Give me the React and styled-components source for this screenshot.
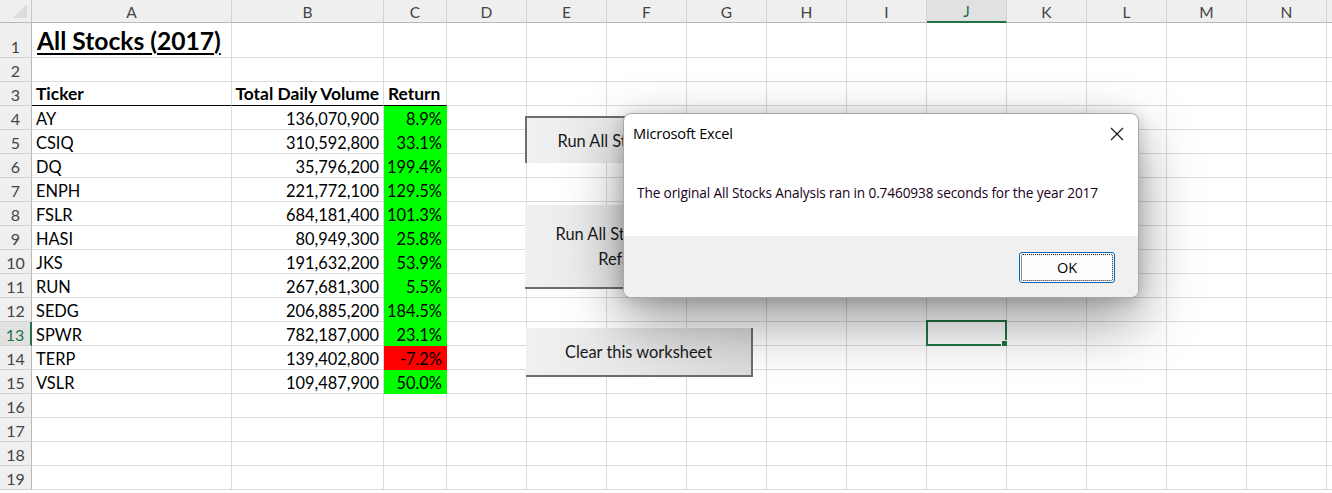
import React from 'react'
import styled, { createGlobalStyle, css } from 'styled-components'

const GlobalStyle = createGlobalStyle`
  html, body {
    margin: 0;
    padding: 0;
    background: #fff;
    overflow: hidden;
  }
  body {
    font-family: Lato, "Liberation Sans", sans-serif;
  }
`

const COLS = ['A', 'B', 'C', 'D', 'E', 'F', 'G', 'H', 'I', 'J', 'K', 'L', 'M', 'N']
const GRID = '#dadada'
const XL_GREEN = '#217346'

const stocks = [
  ['AY', '136,070,900', '8.9%'],
  ['CSIQ', '310,592,800', '33.1%'],
  ['DQ', '35,796,200', '199.4%'],
  ['ENPH', '221,772,100', '129.5%'],
  ['FSLR', '684,181,400', '101.3%'],
  ['HASI', '80,949,300', '25.8%'],
  ['JKS', '191,632,200', '53.9%'],
  ['RUN', '267,681,300', '5.5%'],
  ['SEDG', '206,885,200', '184.5%'],
  ['SPWR', '782,187,000', '23.1%'],
  ['TERP', '139,402,800', '-7.2%'],
  ['VSLR', '109,487,900', '50.0%'],
]

const Workspace = styled.div`
  position: relative;
  width: 1332px;
  height: 493px;
  overflow: hidden;
`

const Sheet = styled.div`
  display: grid;
  grid-template-columns: 32px 200px 152px 63px repeat(11, 80px) 1fr;
  grid-template-rows: 23px 35px repeat(18, 24px);
`

const Corner = styled.div`
  position: relative;
  background: #efefef;
  border-right: 1px solid #c6c6c6;
  border-bottom: 1px solid #b8b8b8;
  box-sizing: border-box;

  &::after {
    content: '';
    position: absolute;
    right: 4px;
    bottom: 4px;
    width: 0;
    height: 0;
    border-left: 14px solid transparent;
    border-bottom: 14px solid #dcdcdc;
  }
`

const ColHead = styled.div`
  box-sizing: border-box;
  display: flex;
  align-items: center;
  justify-content: center;
  background: ${p => (p.$active ? '#e1e1e1' : '#efefef')};
  border-right: 1px solid #d2d2d2;
  border-bottom: ${p => (p.$active ? `2px solid ${XL_GREEN}` : '1px solid #b8b8b8')};
  color: ${p => (p.$active ? XL_GREEN : '#444')};
  font-size: 15.5px;
  padding-top: 1px;
`

const RowHead = styled.div`
  box-sizing: border-box;
  display: flex;
  align-items: flex-end;
  justify-content: center;
  padding-bottom: 1px;
  background: ${p => (p.$active ? '#e1e1e1' : '#efefef')};
  border-bottom: 1px solid #d2d2d2;
  border-right: ${p => (p.$active ? `2px solid ${XL_GREEN}` : '1px solid #b8b8b8')};
  color: ${p => (p.$active ? XL_GREEN : '#444')};
  font-size: 16px;
`

const Cell = styled.div`
  position: relative;
  box-sizing: border-box;
  display: flex;
  align-items: flex-end;
  justify-content: ${p => (p.$right ? 'flex-end' : 'flex-start')};
  padding: 0 4px 1px 4px;
  white-space: nowrap;
  font-size: 16.4px;
  color: #000;
  background: ${p => p.$fill || '#fff'};
  border-right: 1px solid ${p => p.$fill || GRID};
  border-bottom: 1px solid ${p => p.$underline ? '#000' : p.$fill || GRID};
  ${p => p.$bold && css`
    font-weight: 700;
    font-size: 17.4px;
  `}
`

const Title = styled.span`
  font-size: 24.6px;
  font-weight: 700;
  text-decoration: underline;
  text-decoration-thickness: 2px;
  text-underline-offset: 3px;
  padding-left: 1px;
  padding-bottom: 1px;
`

const Selection = styled.div`
  position: absolute;
  left: -1px;
  top: -2px;
  right: -1px;
  bottom: -1px;
  border: 2px solid ${XL_GREEN};

  &::after {
    content: '';
    position: absolute;
    right: -4px;
    bottom: -4px;
    width: 6px;
    height: 6px;
    background: ${XL_GREEN};
    border: 1px solid #fff;
  }
`

const MacroButton = styled.div`
  position: absolute;
  left: ${p => p.$x}px;
  top: ${p => p.$y}px;
  width: 227px;
  height: ${p => p.$h}px;
  box-sizing: border-box;
  display: flex;
  flex-direction: column;
  align-items: center;
  justify-content: center;
  text-align: center;
  line-height: 25px;
  font-size: 16.4px;
  color: #1a1a1a;
  background: linear-gradient(90deg, #f0f0f0 0%, #e6e6e6 60%, #dcdcdc 100%);
  border-right: 2px solid #6e6e6e;
  border-bottom: 2px solid #6e6e6e;
  ${p => p.$pressed && css`
    border: none;
    border-left: 2px solid #6e6e6e;
    border-top: 2px solid #6e6e6e;
  `}
`

const Dialog = styled.div`
  position: absolute;
  left: 623px;
  top: 113px;
  width: 516px;
  height: 185px;
  box-sizing: border-box;
  display: flex;
  flex-direction: column;
  background: #fff;
  border: 1px solid #a9a9a9;
  border-radius: 8px;
  overflow: hidden;
  box-shadow: 0 24px 60px rgba(0, 0, 0, 0.4), 0 2px 16px rgba(0, 0, 0, 0.18);
  font-family: "Open Sans", "Noto Sans", sans-serif;
  color: #000;
`

const TitleBar = styled.div`
  display: flex;
  align-items: center;
  justify-content: space-between;
  height: 38px;
  padding: 0 14px 0 9px;
  font-size: 14.6px;
  letter-spacing: -0.2px;
`

const CloseIcon = styled.svg`
  width: 14px;
  height: 14px;
  margin-top: 2px;
`

const Message = styled.div`
  flex: 1;
  display: flex;
  align-items: center;
  padding: 0 0 4px 13px;
  font-size: 13.7px;
  letter-spacing: -0.15px;
  color: #1a001a;
`

const Footer = styled.div`
  height: 61px;
  display: flex;
  align-items: center;
  justify-content: flex-end;
  padding: 0 23px 0 0;
  background: #f0f0f0;
`

const OkButton = styled.div`
  position: relative;
  width: 96px;
  height: 31px;
  box-sizing: border-box;
  display: flex;
  align-items: center;
  justify-content: center;
  background: #fdfdfd;
  border: 1px solid #0067c0;
  border-radius: 3px;
  font-size: 14.5px;
  margin-top: 1px;

  &::before {
    content: '';
    position: absolute;
    inset: 1px;
    border: 1px dotted #222;
    border-radius: 2px;
  }
`

function dataRow(r) {
  if (r === 1) {
    return [<Cell key="A"><Title>All Stocks (2017)</Title></Cell>]
  }
  if (r === 3) {
    return [
      <Cell key="A" $bold $underline>Ticker</Cell>,
      <Cell key="B" $bold $underline $right>Total Daily Volume</Cell>,
      <Cell key="C" $bold $underline>Return</Cell>,
    ]
  }
  const s = stocks[r - 4]
  if (s) {
    const fill = s[2].startsWith('-') ? '#ff0000' : '#00ff00'
    return [
      <Cell key="A">{s[0]}</Cell>,
      <Cell key="B" $right>{s[1]}</Cell>,
      <Cell key="C" $right $fill={fill}>{s[2]}</Cell>,
    ]
  }
  return []
}

export default function App() {
  const rows = Array.from({ length: 19 }, (_, i) => i + 1)
  return (
    <Workspace>
      <GlobalStyle />
      <Sheet>
        <Corner />
        {COLS.map(c => (
          <ColHead key={c} $active={c === 'J'}>{c}</ColHead>
        ))}
        <ColHead />
        {rows.map(r => {
          const filled = dataRow(r)
          const rest = COLS.slice(filled.length).map(c => (
            <Cell key={c}>{c === 'J' && r === 13 && <Selection />}</Cell>
          ))
          return (
            <React.Fragment key={r}>
              <RowHead $active={r === 13}>{r}</RowHead>
              {filled}
              {rest}
              <Cell />
            </React.Fragment>
          )
        })}
      </Sheet>

      <MacroButton $x={525} $y={116} $h={47} $pressed>
        Run All Stocks Analysis
      </MacroButton>
      <MacroButton $x={525} $y={205} $h={84}>
        <span>Run All Stocks Analysis</span>
        <span>Refactored</span>
      </MacroButton>
      <MacroButton $x={526} $y={328} $h={49}>
        Clear this worksheet
      </MacroButton>

      <Dialog>
        <TitleBar>
          <span>Microsoft Excel</span>
          <CloseIcon viewBox="0 0 14 14">
            <path d="M1 1 L13 13 M13 1 L1 13" stroke="#1a1a1a" strokeWidth="1.2" fill="none" />
          </CloseIcon>
        </TitleBar>
        <Message>
          The original All Stocks Analysis ran in 0.7460938 seconds for the year 2017
        </Message>
        <Footer>
          <OkButton>OK</OkButton>
        </Footer>
      </Dialog>
    </Workspace>
  )
}
